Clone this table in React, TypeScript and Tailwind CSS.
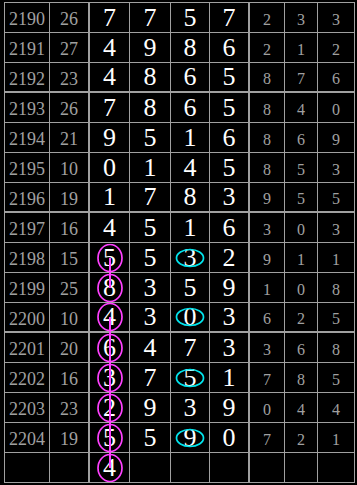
type Row = {
  id: string;
  n: string;
  main: string[];
  tail: string[];
  thick?: boolean;
  pink?: boolean;
  linkUp?: boolean;
  linkDown?: boolean;
  cyan?: boolean;
};

const rows: Row[] = [
  { id: "2190", n: "26", main: ["7", "7", "5", "7"], tail: ["2", "3", "3"] },
  { id: "2191", n: "27", main: ["4", "9", "8", "6"], tail: ["2", "1", "2"] },
  { id: "2192", n: "23", main: ["4", "8", "6", "5"], tail: ["8", "7", "6"], thick: true },
  { id: "2193", n: "26", main: ["7", "8", "6", "5"], tail: ["8", "4", "0"] },
  { id: "2194", n: "21", main: ["9", "5", "1", "6"], tail: ["8", "6", "9"] },
  { id: "2195", n: "10", main: ["0", "1", "4", "5"], tail: ["8", "5", "3"] },
  { id: "2196", n: "19", main: ["1", "7", "8", "3"], tail: ["9", "5", "5"], thick: true },
  { id: "2197", n: "16", main: ["4", "5", "1", "6"], tail: ["3", "0", "3"] },
  { id: "2198", n: "15", main: ["5", "5", "3", "2"], tail: ["9", "1", "1"], pink: true, linkDown: true, cyan: true },
  { id: "2199", n: "25", main: ["8", "3", "5", "9"], tail: ["1", "0", "8"], pink: true, linkUp: true },
  { id: "2200", n: "10", main: ["4", "3", "0", "3"], tail: ["6", "2", "5"], thick: true, pink: true, linkDown: true, cyan: true },
  { id: "2201", n: "20", main: ["6", "4", "7", "3"], tail: ["3", "6", "8"], pink: true, linkUp: true, linkDown: true },
  { id: "2202", n: "16", main: ["3", "7", "5", "1"], tail: ["7", "8", "5"], pink: true, linkUp: true, linkDown: true, cyan: true },
  { id: "2203", n: "23", main: ["2", "9", "3", "9"], tail: ["0", "4", "4"], pink: true, linkUp: true, linkDown: true },
  { id: "2204", n: "19", main: ["5", "5", "9", "0"], tail: ["7", "2", "1"], pink: true, linkUp: true, linkDown: true, cyan: true },
  { id: "", n: "", main: ["4", "", "", ""], tail: ["", "", ""], pink: true, linkUp: true },
];

const mainW = ["w-[40px]", "w-[41px]", "w-[39px]", "w-[40px]"];
const tailW = ["w-[35px]", "w-[33px]", "w-[37px]"];

function PinkMark({ up, down, upThick }: { up?: boolean; down?: boolean; upThick?: boolean }) {
  return (
    <>
      {up && (
        <div
          className={`absolute left-1/2 -ml-[1px] w-[2px] bottom-1/2 bg-[#ff40ff] ${
            upThick ? "-top-[2px]" : "-top-[1px]"
          }`}
        />
      )}
      {down && <div className="absolute left-1/2 -ml-[1px] w-[2px] top-1/2 bottom-0 bg-[#ff40ff]" />}
      <svg
        className="absolute left-1/2 top-1/2 -translate-x-1/2 -translate-y-1/2"
        width="26"
        height="29"
        viewBox="0 0 26 29"
      >
        <ellipse cx="13" cy="14.5" rx="12" ry="13.5" fill="none" stroke="#ff40ff" strokeWidth="1.7" />
      </svg>
    </>
  );
}

function CyanMark() {
  return (
    <svg
      className="absolute left-1/2 top-1/2 -translate-x-1/2 -translate-y-1/2"
      width="30"
      height="20"
      viewBox="0 0 30 20"
    >
      <ellipse cx="15" cy="10" rx="13.5" ry="8.5" fill="none" stroke="#00e5ee" strokeWidth="1.7" />
    </svg>
  );
}

export default function App() {
  return (
    <div className="w-[357px] h-[485px] overflow-hidden bg-black pt-[2px] pl-[4px] font-['Liberation_Serif',serif]">
      <div className="w-[351px] border-l border-t border-[#a0a0a0]">
        {rows.map((r, i) => {
          const prevThick = i > 0 && rows[i - 1].thick;
          return (
            <div
              key={i}
              className={`flex h-[30px] border-[#a0a0a0] ${r.thick ? "border-b-2" : "border-b"}`}
            >
              <div className="w-[45px] flex items-center justify-center pt-[4px] border-r border-[#a0a0a0] text-[18px] text-[#a0a0a0]">
                {r.id}
              </div>
              <div className="w-[40px] flex items-center justify-center pt-[4px] border-r-2 border-[#a0a0a0] text-[18px] text-[#a0a0a0]">
                {r.n}
              </div>
              {r.main.map((d, j) => (
                <div
                  key={j}
                  className={`relative ${mainW[j]} flex items-center justify-center border-[#a0a0a0] text-[26px] leading-none text-white ${
                    j === 3 ? "border-r-2" : "border-r"
                  }`}
                >
                  <span className="relative">{d}</span>
                  {j === 0 && r.pink && (
                    <PinkMark up={r.linkUp} down={r.linkDown} upThick={prevThick} />
                  )}
                  {j === 2 && r.cyan && <CyanMark />}
                </div>
              ))}
              {r.tail.map((d, j) => (
                <div
                  key={j}
                  className={`${tailW[j]} flex items-center justify-center pt-[4px] border-r border-[#a0a0a0] text-[16px] text-[#a0a0a0]`}
                >
                  {d}
                </div>
              ))}
            </div>
          );
        })}
      </div>
    </div>
  );
}
